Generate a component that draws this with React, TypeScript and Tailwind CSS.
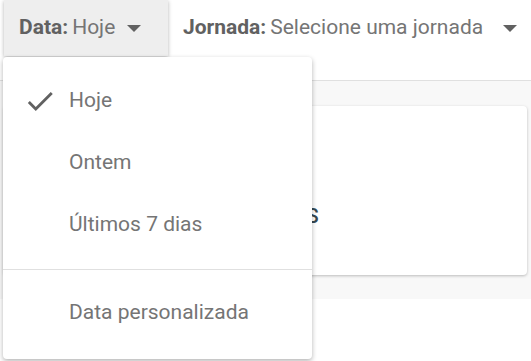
import React from "react";

function Caret({ gap = "ml-3" }: { gap?: string }) {
  return (
    <svg width="14" height="7" viewBox="0 0 14 7" className={`${gap} fill-[#616161]`}>
      <path d="M0 0h14L7 7z" />
    </svg>
  );
}

function Check() {
  return (
    <svg width="34" height="34" viewBox="0 0 24 24" className="fill-[#616161]">
      <path d="M9 16.17L4.83 12l-1.42 1.41L9 19 21 7l-1.41-1.41z" />
    </svg>
  );
}

const options = [
  { label: "Hoje", selected: true },
  { label: "Ontem", selected: false },
  { label: "Últimos 7 dias", selected: false },
];

export default function App() {
  return (
    <div
      className="relative w-[531px] h-[361px] overflow-hidden bg-white"
      style={{ fontFamily: "Roboto, 'Liberation Sans', sans-serif" }}
    >
      <header className="h-[81px] flex items-start border-b border-[#e0e0e0] bg-white">
        <button className="ml-1 h-[56px] w-[164px] flex items-center pl-[15px] bg-[#eeeeee] shadow-[0_1px_4px_rgba(0,0,0,0.3)] text-[21px] text-[#757575]">
          <span className="font-bold text-[#616161]">Data:</span>
          <span className="ml-1">Hoje</span>
          <Caret />
        </button>
        <button className="ml-[15px] h-[56px] flex items-center text-[21px] text-[#757575]">
          <span className="font-bold text-[#616161]">Jornada:</span>
          <span className="ml-1">Selecione uma jornada</span>
          <Caret gap="ml-5" />
        </button>
      </header>

      <main className="bg-[#f8f8f8] pt-[25px] pb-[24px] px-[4px]">
        <div className="h-[169px] bg-white rounded shadow-[0_1px_3px_rgba(0,0,0,0.25)] flex items-center pl-[160px] pt-[50px]">
          <span className="text-[20px] font-medium tracking-wide text-[#37474f]">
            SEM JORNADAS
          </span>
        </div>
      </main>

      <div className="absolute left-[3px] top-[57px] w-[309px] h-[302px] bg-white rounded-sm shadow-[0_2px_5px_rgba(0,0,0,0.3)] text-[21px] text-[#757575]">
        <ul className="pt-[13px]">
          {options.map((o) => (
            <li key={o.label} className="h-[62px] flex items-center">
              <span className="w-[66px] flex justify-center pl-2">
                {o.selected && <Check />}
              </span>
              <span>{o.label}</span>
            </li>
          ))}
        </ul>
        <div className="mt-[13px] border-t border-[#e0e0e0]" />
        <div className="h-[86px] flex items-center pl-[66px]">Data personalizada</div>
      </div>
    </div>
  );
}
